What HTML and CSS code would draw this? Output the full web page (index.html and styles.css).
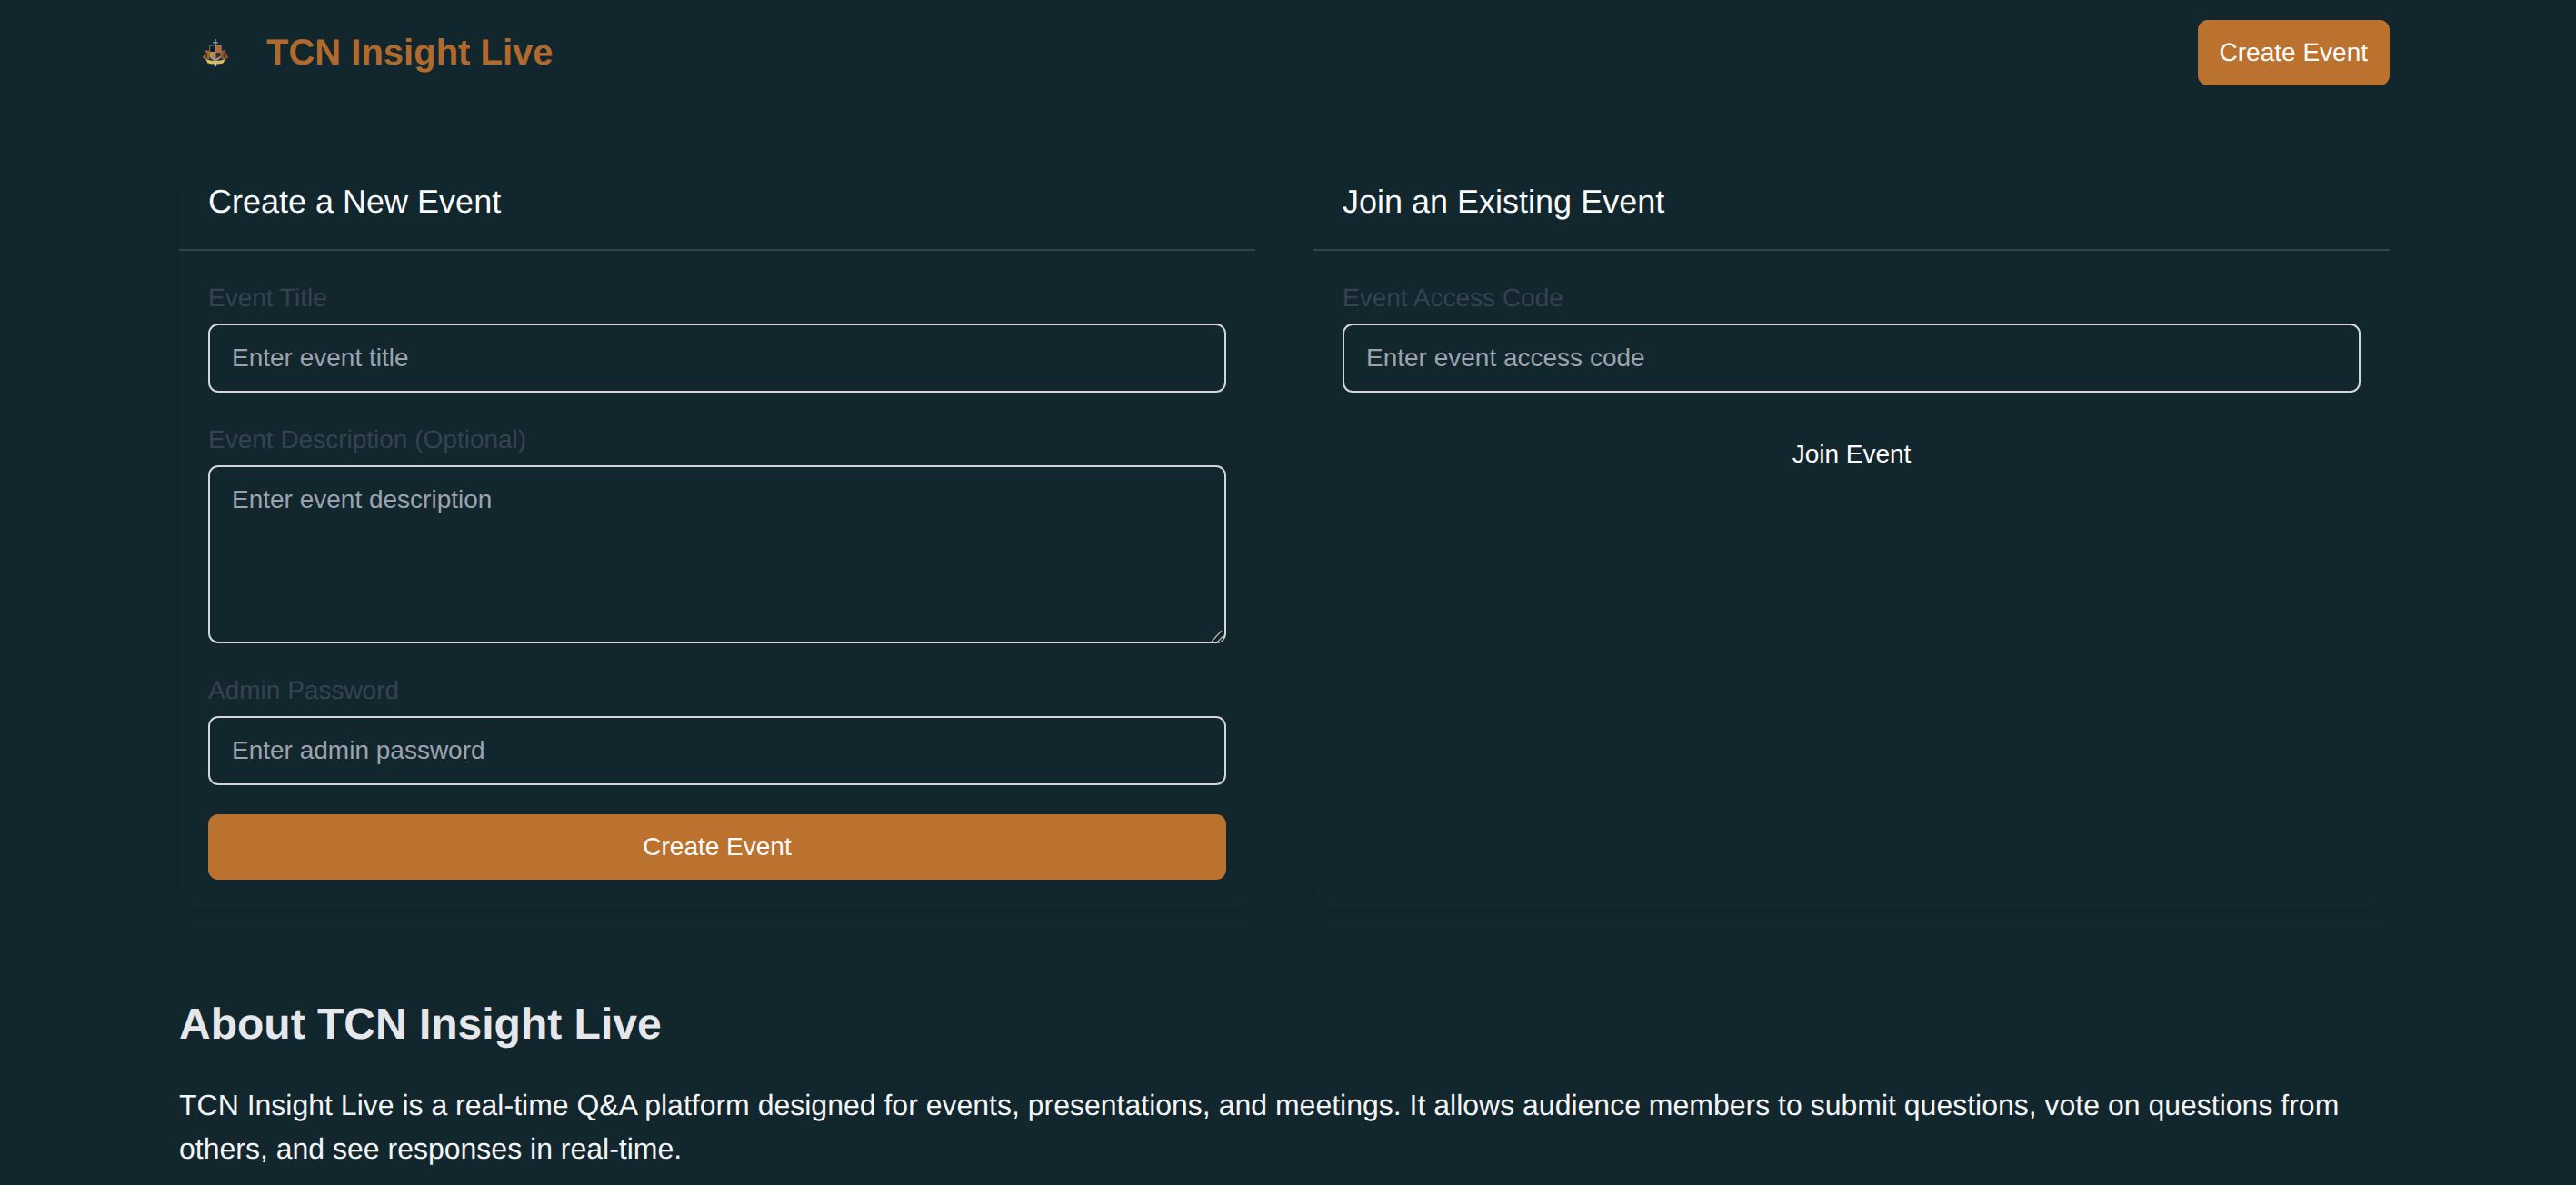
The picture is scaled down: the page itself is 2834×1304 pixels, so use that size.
FILE: index.html
```html
<!DOCTYPE html>
<html lang="en">
<head>
<meta charset="utf-8">
<title>TCN Insight Live</title>
<link rel="stylesheet" href="styles.css">
</head>
<body>
<header class="site-header">
  <div class="container header-row">
    <a class="brand" href="#">
      <svg class="logo" viewBox="3 3 26 27.500" aria-hidden="true">
        <path d="M15.400 3h1.200v3h2v1.200h-2V9h-1.200V7.200h-2V6h2z" fill="#9fa6aa"/>
        <path d="M3 22l3.500-8 3.500 1v8.500l-5-.5z" fill="#a8662c"/>
        <path d="M6 16l2 1v5H5.500z" fill="#5c3a20"/>
        <path d="M29 22l-3.500-8-3.500 1v8.500l5-.5z" fill="#96572a"/>
        <path d="M26 16l-2 1v5h2.500z" fill="#4f3320"/>
        <path d="M10 9h12v10.500c0 3-3 4.500-6 6-3-1.500-6-3-6-6z" fill="#8f9599"/>
        <path d="M10.700 9.800h4.900v6H10.700z" fill="#14171b"/>
        <path d="M16.400 9.800h4.900v6h-4.900z" fill="#c0652c"/>
        <path d="M10.700 16.600h4.900v6.500l-4.900-3z" fill="#b9893f"/>
        <path d="M16.400 16.600h4.900v3.400l-4.900 3z" fill="#4a2d20"/>
        <path d="M6 23c3 1.500 6.500 2 10 2s7-.5 10-2l-2 4c-2.500 1-5 1.300-8 1.300s-5.500-.3-8-1.300z" fill="#dcbd5c"/>
        <path d="M15 27h2v3.500h-2z" fill="#c9cccd"/>
      </svg>
      <span class="brand-name">TCN Insight Live</span>
    </a>
    <a class="btn btn-primary" href="#">Create Event</a>
  </div>
</header>
<main class="container main">
  <div class="cards">
    <section class="card">
      <h2 class="card-title">Create a New Event</h2>
      <form class="card-body">
        <div class="field">
          <label class="label" for="t">Event Title</label>
          <input class="input" id="t" type="text" placeholder="Enter event title">
        </div>
        <div class="field">
          <label class="label" for="d">Event Description (Optional)</label>
          <div class="textarea-wrap">
            <textarea class="input textarea" id="d" placeholder="Enter event description"></textarea>
            <svg class="grip" viewBox="0 0 16 16" aria-hidden="true">
              <path d="M3.800 15.800L14.800 3.800M10.800 15.800L15.800 10.300" stroke="#14171b" stroke-width="2" fill="none"/>
              <path d="M3 15L14 3M10 15L15 9.500" stroke="#a3a7aa" stroke-width="1.600" fill="none"/>
            </svg>
          </div>
        </div>
        <div class="field">
          <label class="label" for="p">Admin Password</label>
          <input class="input" id="p" type="password" placeholder="Enter admin password">
        </div>
        <button class="btn btn-primary btn-block" type="button">Create Event</button>
      </form>
    </section>
    <section class="card">
      <h2 class="card-title">Join an Existing Event</h2>
      <form class="card-body">
        <div class="field">
          <label class="label" for="c">Event Access Code</label>
          <input class="input" id="c" type="text" placeholder="Enter event access code">
        </div>
        <button class="btn btn-ghost btn-block" type="button">Join Event</button>
      </form>
    </section>
  </div>
  <section class="about">
    <h2 class="about-title">About TCN Insight Live</h2>
    <p class="about-text">TCN Insight Live is a real-time Q&amp;A platform designed for events, presentations, and meetings. It allows audience members to submit questions, vote on questions from others, and see responses in real-time.</p>
  </section>
</main>
</body>
</html>
```
FILE: styles.css
```css
* { box-sizing: border-box; }
html, body { margin: 0; height: 100%; overflow: hidden; }
body {
  background: #12262e;
  color: #fff;
  font-family: "Liberation Sans", Arial, sans-serif;
  font-size: 28px;
  text-rendering: geometricPrecision;
}
.container { width: 2432px; margin-left: 197px; }
.site-header {
  height: 122px;
  padding: 22px 0 28px;
  box-shadow: 0 1px 2px rgba(0, 0, 0, 0.06);
}
.header-row {
  height: 100%;
  display: flex;
  align-items: center;
  justify-content: space-between;
}
.brand { display: flex; align-items: center; text-decoration: none; }
.logo { width: 30px; height: 30px; margin-left: 25px; }
.brand-name {
  margin-left: 41px;
  color: #b06a2e;
  font-size: 40px;
  font-weight: 700;
}
.btn {
  display: flex;
  align-items: center;
  justify-content: center;
  height: 72px;
  border: 0;
  border-radius: 11px;
  font: inherit;
  color: #fff;
  text-decoration: none;
}
.btn-primary { background: #bb722f; padding: 0 24px; }
.btn-ghost { background: transparent; }
.btn-block { width: 100%; margin-top: 32px; }
.main { padding-top: 58px; }
.cards {
  display: grid;
  grid-template-columns: 1184px 1184px;
  justify-content: space-between;
}
.card {
  border-radius: 22px;
  background: #12262e;
  box-shadow: 0 4px 8px rgba(0, 0, 0, 0.08);
}
.card-title {
  margin: 0;
  padding: 15px 32px 25px;
  line-height: 54px;
  border-bottom: 2px solid #374151;
  font-size: 36px;
  font-weight: 400;
  color: #f9fafb;
}
.card-body { padding: 32px; }
.field { margin-bottom: 32px; }
.field:last-of-type { margin-bottom: 0; }
.label {
  display: block;
  line-height: 40px;
  margin-bottom: 8px;
  color: #374151;
  font-size: 28px;
}
.input {
  display: block;
  width: 100%;
  height: 76px;
  padding: 0 24px;
  background: transparent;
  border: 2px solid #d1d5db;
  border-radius: 11px;
  color: #fff;
  font: inherit;
  outline: 0;
}
.input::placeholder { color: #9ca3af; opacity: 1; }
.textarea-wrap { position: relative; }
.textarea { height: 196px; padding-top: 16px; resize: none; overflow: auto; line-height: 40px; }
.grip {
  position: absolute;
  right: 3px;
  bottom: 1px;
  width: 16px;
  height: 16px;
  pointer-events: none;
}
.about { margin-top: 96px; }
.about-title {
  margin: 0 0 32px;
  font-size: 48px;
  line-height: 64px;
  font-weight: 700;
  color: #e5e7eb;
}
.about-text {
  margin: 0;
  font-size: 32px;
  line-height: 48px;
  color: #f3f4f6;
}
```
